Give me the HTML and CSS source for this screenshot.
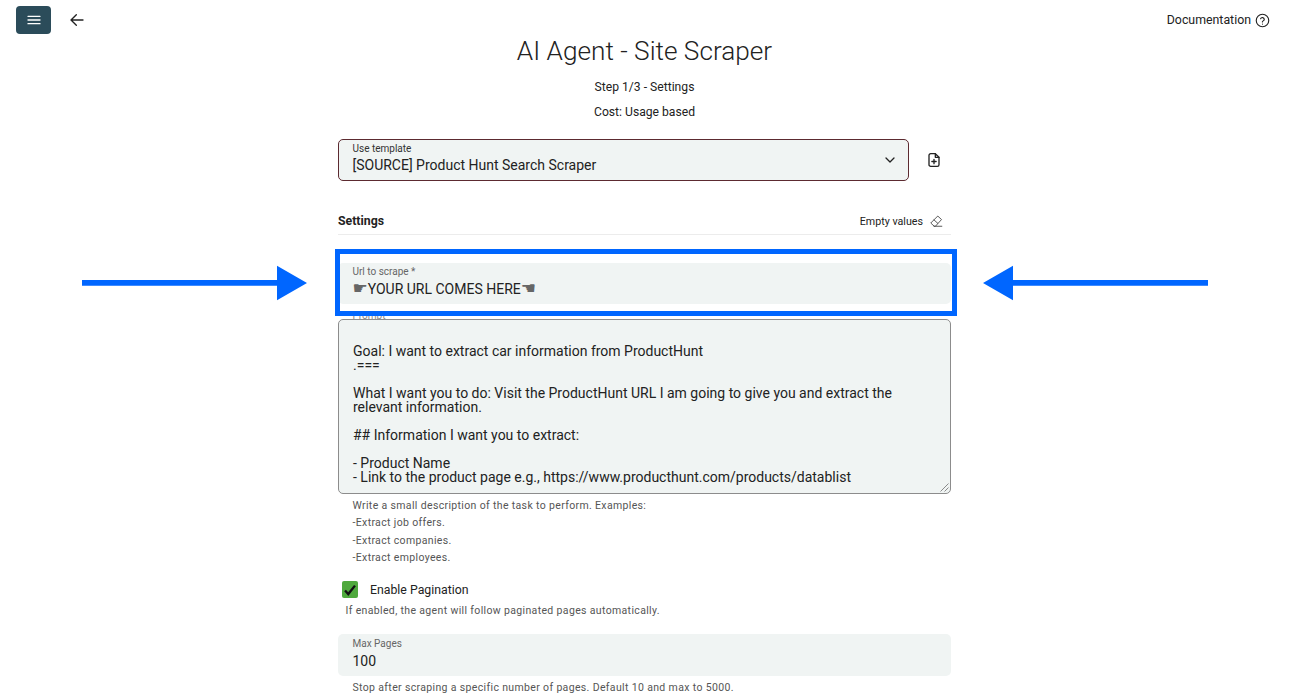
FILE: index.html
```html
<!DOCTYPE html>
<html lang="en">
<head>
<meta charset="utf-8">
<title>AI Agent - Site Scraper</title>
<link rel="stylesheet" href="styles.css">
</head>
<body>
<header class="topbar">
  <div class="topbar-left">
    <button class="menu-btn" type="button" aria-label="Menu">
      <svg width="16" height="16" viewBox="0 0 24 24" fill="none" stroke="#fff" stroke-width="2" stroke-linecap="round"><path d="M3 6.500h18M3 12h18M3 17.500h18"/></svg>
    </button>
    <button class="back-btn" type="button" aria-label="Back">
      <svg width="16" height="16" viewBox="0 0 24 24" fill="none" stroke="#222" stroke-width="2" stroke-linecap="round" stroke-linejoin="round"><path d="M21 12H3.500M11 4l-8 8 8 8"/></svg>
    </button>
  </div>
  <a class="doc-link">Documentation
    <svg width="15" height="15" viewBox="0 0 24 24" fill="none" stroke="#222" stroke-width="1.800" stroke-linecap="round" stroke-linejoin="round"><circle cx="12" cy="12" r="10"/><path d="M9 9.200a3 3 0 0 1 5.800 1c0 2-3 2.600-3 4"/><path d="M12 17.600v.1"/></svg>
  </a>
</header>

<main class="page">
  <h1 class="title">AI Agent - Site Scraper</h1>
  <p class="sub sub-step">Step 1/3 - Settings</p>
  <p class="sub sub-cost">Cost: Usage based</p>

  <div class="form">
    <div class="template-row">
      <div class="field field-select">
        <span class="field-label label-dark">Use template</span>
        <span class="field-value">[SOURCE] Product Hunt Search Scraper</span>
        <svg class="chevron" width="12" height="12" viewBox="0 0 24 24" fill="none" stroke="#222" stroke-width="2.600" stroke-linecap="round" stroke-linejoin="round"><path d="M4 8l8 8 8-8"/></svg>
      </div>
      <svg class="file-plus" width="16" height="16" viewBox="0 0 24 24" fill="none" stroke="#222" stroke-width="2" stroke-linecap="round" stroke-linejoin="round"><path d="M14 2.500H7a2.500 2.500 0 0 0-2.500 2.500v14A2.500 2.500 0 0 0 7 21.500h10a2.500 2.500 0 0 0 2.500-2.500V8z"/><path d="M14 2.500V8h5.500M12 11v6.500M8.800 14.200h6.400"/></svg>
    </div>

    <div class="section-head">
      <h2 class="section-title">Settings</h2>
      <span class="empty-values">Empty values
        <svg width="14" height="14" viewBox="0 0 24 24" fill="none" stroke="#444" stroke-width="1.500" stroke-linecap="round" stroke-linejoin="round"><path d="M8.500 20.500 3 15.500 15 3.500l6.500 6-10 11zM22 21H8.500M8.500 10l6.500 6"/></svg>
      </span>
    </div>

    <div class="field field-url">
      <span class="field-label">Url to scrape *</span>
      <span class="field-value"><span class="hand">☛</span>YOUR URL COMES HERE<span class="hand">☚</span></span>
    </div>

    <div class="prompt-wrap">
      <span class="field-label prompt-label">Prompt *</span>
      <div class="prompt-box">
        <p class="prompt-text">Goal: I want to extract car information from ProductHunt
.===

What I want you to do: Visit the ProductHunt URL I am going to give you and extract the relevant information.

## Information I want you to extract:

- Product Name
- Link to the product page e.g., https://www.producthunt.com/products/datablist</p>
        <svg class="resize-grip" width="9" height="9" viewBox="0 0 9 9" fill="none" stroke="#8a8a8a" stroke-width="1"><path d="M0.500 8.500l8-8M4.500 8.500l4-4"/></svg>
      </div>
    </div>

    <div class="help help-prompt">
      <p>Write a small description of the task to perform. Examples:</p>
      <p>-Extract job offers.</p>
      <p>-Extract companies.</p>
      <p>-Extract employees.</p>
    </div>

    <label class="check-row">
      <span class="checkbox">
        <svg width="14" height="14" viewBox="0 0 24 24" fill="none" stroke="#111" stroke-width="4"><path d="M3.500 13l5.500 6L20.500 4.500"/></svg>
      </span>
      <span class="check-label">Enable Pagination</span>
    </label>
    <p class="help help-check">If enabled, the agent will follow paginated pages automatically.</p>

    <div class="field field-pages">
      <span class="field-label">Max Pages</span>
      <span class="field-value">100</span>
    </div>
    <p class="help help-pages">Stop after scraping a specific number of pages. Default 10 and max to 5000.</p>
  </div>
</main>

<div class="highlight"></div>
<svg class="arrow arrow-right" width="225" height="36" viewBox="0 0 225 36"><path fill="#0066ff" d="M0 15h195V.7L225 18l-30 17.300V20.800H0z"/></svg>
<svg class="arrow arrow-left" width="225" height="36" viewBox="0 0 225 36"><path fill="#0066ff" d="M225 15H30V.7L0 18l30 17.300V20.800h195z"/></svg>
</body>
</html>
```

FILE: styles.css
```css
* { box-sizing: border-box; }
html, body { margin: 0; padding: 0; }
body {
  height: 700px;
  overflow: hidden;
  position: relative;
  background: #fff;
  color: #222;
  font-family: Roboto, "Liberation Sans", sans-serif;
}
p, h1, h2 { margin: 0; font-weight: 400; }

.topbar {
  height: 34px;
  padding: 6px 20px 0 16px;
  display: flex;
  justify-content: space-between;
  align-items: flex-start;
}
.topbar-left { display: flex; align-items: center; gap: 18px; }
.menu-btn {
  width: 35px;
  height: 28px;
  padding: 0;
  border: 0;
  border-radius: 4px;
  background: #2b4c5a;
  display: flex;
  align-items: center;
  justify-content: center;
}
.back-btn {
  width: 16px;
  height: 16px;
  padding: 0;
  border: 0;
  background: none;
  display: flex;
}
.doc-link {
  display: flex;
  align-items: center;
  gap: 4px;
  margin-top: 7px;
  font-size: 12.350px;
  line-height: 15px;
}

.page { display: flex; flex-direction: column; align-items: center; padding-right: 1px; }
.title {
  margin-top: 1px;
  font-size: 26.200px;
  line-height: 32px;
  font-weight: 300;
}
.sub { font-size: 12.150px; line-height: 16px; }
.sub-step { margin-top: 12px; }
.sub-cost { margin-top: 9px; }

.form { width: 613px; margin-top: 19px; }
.template-row { display: flex; align-items: center; gap: 17px; }
.field {
  position: relative;
  display: flex;
  flex-direction: column;
  padding: 0 14.500px;
  background: #f0f4f3;
  border-radius: 5px;
}
.field-select {
  width: 571px;
  height: 42px;
  padding: 3px 13.500px;
  border: 1px solid #5c2a30;
}
.field-select .field-value { margin-top: 1px; }
.field-label { font-size: 10px; line-height: 12px; color: #666; }
.label-dark { color: #333; }
.field-value { font-size: 14px; line-height: 18px; color: #222; margin-top: 2px; }
.chevron { position: absolute; right: 12px; top: 14px; }
.file-plus { margin-top: -1px; }

.section-head {
  display: flex;
  justify-content: space-between;
  align-items: center;
  height: 32px;
  margin-top: 22px;
  padding: 4px 8px 0 0;
  border-bottom: 1px solid #ececec;
}
.section-title { font-size: 12.300px; font-weight: 700; }
.empty-values { display: flex; align-items: center; gap: 6px; font-size: 10.700px; padding-top: 1px; }

.field-url { height: 41px; margin-top: 28px; padding-top: 3px; }
.prompt-wrap { position: relative; margin-top: 15px; }
.prompt-label { position: absolute; left: 14.500px; top: -9px; color: #888; }
.prompt-box {
  position: relative;
  height: 175px;
  padding: 24px 14.500px 0 14px;
  background: #f0f4f3;
  border: 1px solid #8c8c8c;
  border-radius: 5px;
  overflow: hidden;
}
.prompt-text { font-size: 14px; line-height: 14px; white-space: pre-line; color: #222; }
.resize-grip { position: absolute; right: 1px; bottom: 1px; }
.hand { font-family: "DejaVu Sans", sans-serif; color: #666; font-size: 17px; line-height: 1; }

.help { font-size: 10.500px; letter-spacing: 0.350px; color: #555; padding-left: 14.500px; }
.help-prompt { margin-top: 3px; }
.help-prompt p { line-height: 17.400px; }

.check-row { display: flex; align-items: center; gap: 11px; margin-top: 14px; padding-left: 4px; height: 18px; }
.checkbox {
  width: 16px;
  height: 17px;
  border-radius: 2px;
  background: #4fa93d;
  display: flex;
  align-items: center;
  justify-content: center;
}
.check-label { font-size: 12.300px; margin-left: 1px; }
.help-check { padding-left: 7.500px; margin-top: 4px; line-height: 16px; }

.field-pages { height: 42px; margin-top: 15px; padding-top: 4px; }
.help-pages { margin-top: 4px; line-height: 16px; }

.highlight {
  position: absolute;
  left: 335px;
  top: 249px;
  width: 622px;
  height: 67px;
  border: 5px solid #0066ff;
}
.arrow { position: absolute; top: 265px; }
.arrow-right { left: 82px; }
.arrow-left { left: 983px; }
```
